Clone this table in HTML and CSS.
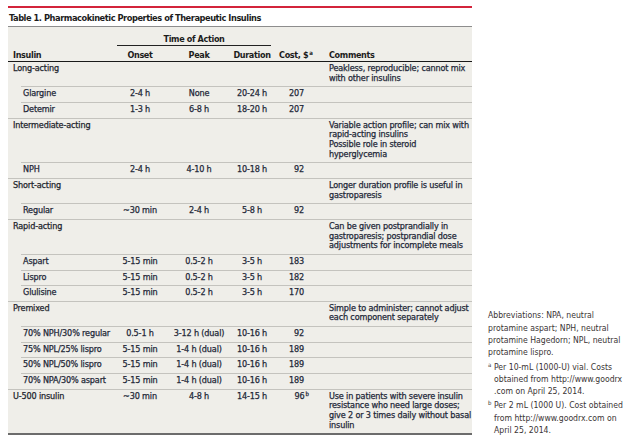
FILE: index.html
```html
<!DOCTYPE html>
<html lang="en">
<head>
<meta charset="utf-8">
<title>Table 1. Pharmacokinetic Properties of Therapeutic Insulins</title>
<link rel="stylesheet" href="styles.css">
</head>
<body>
<div class="page">
  <section class="tbl-wrap">
    <h1 class="title">Table 1. Pharmacokinetic Properties of Therapeutic Insulins</h1>
    <div class="tbl">
      <div class="row head-top">
        <div class="toa">Time of Action</div>
      </div>
      <div class="row head">
        <div class="cell c1">Insulin</div>
        <div class="cell c2">Onset</div>
        <div class="cell c3">Peak</div>
        <div class="cell c4">Duration</div>
        <div class="cell c5 hc5">Cost, $<span class="sup">a</span></div>
        <div class="cell c6">Comments</div>
      </div>

      <div class="row group first">
        <div class="cell c1">Long-acting</div>
        <div class="cell c2"></div><div class="cell c3"></div><div class="cell c4"></div><div class="cell c5"></div>
        <div class="cell c6">Peakless, reproducible; cannot mix<br>with other insulins</div>
      </div>
      <div class="row sub">
        <div class="cell c1">Glargine</div><div class="cell c2">2-4 h</div><div class="cell c3">None</div><div class="cell c4">20-24 h</div><div class="cell c5">207</div><div class="cell c6"></div>
      </div>
      <div class="row sub">
        <div class="cell c1">Detemir</div><div class="cell c2">1-3 h</div><div class="cell c3">6-8 h</div><div class="cell c4">18-20 h</div><div class="cell c5">207</div><div class="cell c6"></div>
      </div>

      <div class="row group">
        <div class="cell c1">Intermediate-acting</div>
        <div class="cell c2"></div><div class="cell c3"></div><div class="cell c4"></div><div class="cell c5"></div>
        <div class="cell c6">Variable action profile; can mix with<br>rapid-acting insulins<br>Possible role in steroid<br>hyperglycemia</div>
      </div>
      <div class="row sub">
        <div class="cell c1">NPH</div><div class="cell c2">2-4 h</div><div class="cell c3">4-10 h</div><div class="cell c4">10-18 h</div><div class="cell c5">92</div><div class="cell c6"></div>
      </div>

      <div class="row group">
        <div class="cell c1">Short-acting</div>
        <div class="cell c2"></div><div class="cell c3"></div><div class="cell c4"></div><div class="cell c5"></div>
        <div class="cell c6">Longer duration profile is useful in<br>gastroparesis</div>
      </div>
      <div class="row sub">
        <div class="cell c1">Regular</div><div class="cell c2">~30 min</div><div class="cell c3">2-4 h</div><div class="cell c4">5-8 h</div><div class="cell c5">92</div><div class="cell c6"></div>
      </div>

      <div class="row group">
        <div class="cell c1">Rapid-acting</div>
        <div class="cell c2"></div><div class="cell c3"></div><div class="cell c4"></div><div class="cell c5"></div>
        <div class="cell c6">Can be given postprandially in<br>gastroparesis; postprandial dose<br>adjustments for incomplete meals</div>
      </div>
      <div class="row sub">
        <div class="cell c1">Aspart</div><div class="cell c2">5-15 min</div><div class="cell c3">0.5-2 h</div><div class="cell c4">3-5 h</div><div class="cell c5">183</div><div class="cell c6"></div>
      </div>
      <div class="row sub">
        <div class="cell c1">Lispro</div><div class="cell c2">5-15 min</div><div class="cell c3">0.5-2 h</div><div class="cell c4">3-5 h</div><div class="cell c5">182</div><div class="cell c6"></div>
      </div>
      <div class="row sub">
        <div class="cell c1">Glulisine</div><div class="cell c2">5-15 min</div><div class="cell c3">0.5-2 h</div><div class="cell c4">3-5 h</div><div class="cell c5">170</div><div class="cell c6"></div>
      </div>

      <div class="row group">
        <div class="cell c1">Premixed</div>
        <div class="cell c2"></div><div class="cell c3"></div><div class="cell c4"></div><div class="cell c5"></div>
        <div class="cell c6">Simple to administer; cannot adjust<br>each component separately</div>
      </div>
      <div class="row sub">
        <div class="cell c1">70% NPH/30% regular</div><div class="cell c2">0.5-1 h</div><div class="cell c3">3-12 h (dual)</div><div class="cell c4">10-16 h</div><div class="cell c5">92</div><div class="cell c6"></div>
      </div>
      <div class="row sub">
        <div class="cell c1">75% NPL/25% lispro</div><div class="cell c2">5-15 min</div><div class="cell c3">1-4 h (dual)</div><div class="cell c4">10-16 h</div><div class="cell c5">189</div><div class="cell c6"></div>
      </div>
      <div class="row sub">
        <div class="cell c1">50% NPL/50% lispro</div><div class="cell c2">5-15 min</div><div class="cell c3">1-4 h (dual)</div><div class="cell c4">10-16 h</div><div class="cell c5">189</div><div class="cell c6"></div>
      </div>
      <div class="row sub">
        <div class="cell c1">70% NPA/30% aspart</div><div class="cell c2">5-15 min</div><div class="cell c3">1-4 h (dual)</div><div class="cell c4">10-16 h</div><div class="cell c5">189</div><div class="cell c6"></div>
      </div>

      <div class="row group last">
        <div class="cell c1">U-500 insulin</div><div class="cell c2">~30 min</div><div class="cell c3">4-8 h</div><div class="cell c4">14-15 h</div><div class="cell c5">96<span class="sup hang">b</span></div>
        <div class="cell c6">Use in patients with severe insulin<br>resistance who need large doses;<br>give 2 or 3 times daily without basal<br>insulin</div>
      </div>
    </div>
  </section>

  <aside class="notes">
    <p class="abbr">Abbreviations: NPA, neutral<br>protamine aspart; NPH, neutral<br>protamine Hagedorn; NPL, neutral<br>protamine lispro.</p>
    <p class="fn"><span class="fn-mark">a</span>Per 10-mL (1000-U) vial. Costs<br>obtained from http://www.goodrx<br>.com on April 25, 2014.</p>
    <p class="fn"><span class="fn-mark">b</span>Per 2 mL (1000 U). Cost obtained<br>from http://www.goodrx.com on<br>April 25, 2014.</p>
  </aside>
</div>
</body>
</html>
```

FILE: styles.css
```css
html, body {
  margin: 0;
  padding: 0;
  background: #ffffff;
}

body {
  font-family: "DejaVu Sans Condensed", "DejaVu Sans", "Liberation Sans", Arial, sans-serif;
  font-stretch: condensed;
  font-size: 9px;
  color: #222;
}

.page {
  display: flex;
  align-items: flex-start;
  padding: 6px 0 0 8px;
}

.tbl-wrap {
  width: 464px;
  flex: none;
  border-top: 2px solid #d3243b;
}

.title {
  margin: 0;
  padding: 4px 0 0 1px;
  height: 14px;
  font-size: 9.2px;
  letter-spacing: -0.45px;
  line-height: 12px;
  font-weight: bold;
  color: #1c1c1c;
  border-bottom: 1px solid #8d8d8d;
  white-space: nowrap;
}

.tbl {
  background: #efeee9;
  border-bottom: 2px solid #6c6c6c;
}

.row {
  --c1: 107px;
  display: grid;
  grid-template-columns: var(--c1) 50px 68px 38px 44px 1fr;
  border-top: 1px solid #c4c3be;
}

.row.sub {
  --c1: 94px;
  margin-left: 13px;
}

.row.first,
.row.head,
.row.head-top {
  border-top: 0;
}

.cell {
  padding: 2px 0 3px;
  line-height: 9.65px;
  letter-spacing: -0.15px;
  white-space: nowrap;
  color: #232838;
  -webkit-text-stroke: 0.25px #232838;
}

.c1 { padding-left: 5px; }
.sub .c1 { padding-left: 2px; }
.c2, .c3, .c4 { text-align: center; }
.c5 { text-align: right; padding-right: 11px; }
.c6 { padding-left: 14px; }

.head-top {
  padding-top: 7px;
}

.toa {
  grid-column: 2 / 5;
  margin-left: 2px;
  text-align: center;
  line-height: 10px;
  padding-bottom: 1px;
  font-weight: bold;
  letter-spacing: -0.35px;
  color: #1c1c1c;
  border-bottom: 1px solid #222;
}

.head {
  border-bottom: 1px solid #1a1a1a;
}

.head .cell {
  padding: 4px 0 1px;
  line-height: 10px;
  font-weight: bold;
  letter-spacing: -0.35px;
  color: #1c1c1c;
  -webkit-text-stroke: 0;
}

.head .c1 { padding-left: 5px; }
.head .c6 { padding-left: 14px; }
.head .hc5 { padding-right: 2px; }

.group .c1 {
  color: #222;
}

.sup {
  font-size: 6px;
  line-height: 0;
  vertical-align: 3px;
  margin-left: 1px;
  letter-spacing: 0;
}

.sup.hang {
  margin-right: -5px;
}

.notes {
  align-self: flex-end;
  width: 156px;
  margin-left: 16px;
  margin-bottom: -1px;
  color: #3a3434;
  font-size: 8.6px;
  line-height: 12.3px;
}

.notes p {
  margin: 0;
  white-space: nowrap;
}

.notes .fn {
  margin-top: 2px;
  padding-left: 6px;
}

.fn-mark {
  display: inline-block;
  width: 6px;
  margin-left: -6px;
  font-size: 6px;
  line-height: 0;
  vertical-align: 3px;
}
```
